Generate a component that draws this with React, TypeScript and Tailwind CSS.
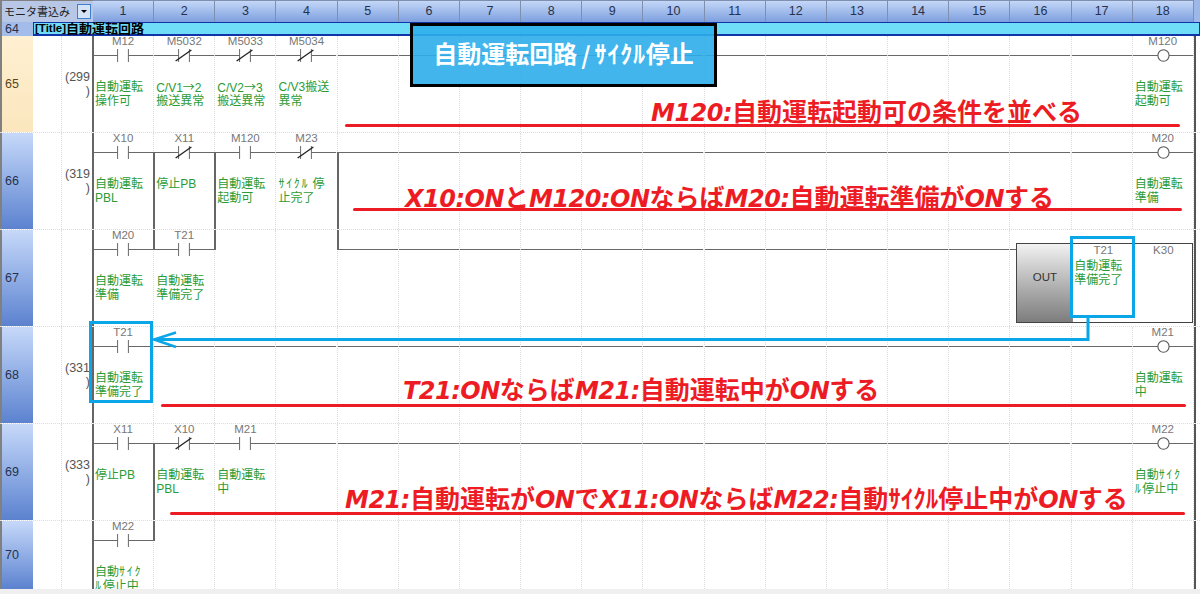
type Kind = 'no' | 'nc' | 'wire' | 'coil' | 'none';

type Cell = {
  kind: Kind;
  label?: string;
  comment?: string;
  up?: boolean;
  down?: boolean;
};

type Row = {
  no: number;
  step?: string;
  cells: Cell[];
  out?: boolean;
  last?: boolean;
};

const no = (label: string, comment: string, extra: Partial<Cell> = {}): Cell => ({ kind: 'no', label, comment, ...extra });
const nc = (label: string, comment: string, extra: Partial<Cell> = {}): Cell => ({ kind: 'nc', label, comment, ...extra });
const wires = (n: number): Cell[] => Array.from({ length: n }, () => ({ kind: 'wire' as Kind }));
const blanks = (n: number): Cell[] => Array.from({ length: n }, () => ({ kind: 'none' as Kind }));
const coil = (label: string, comment: string): Cell => ({ kind: 'coil', label, comment });

const ROWS: Row[] = [
  {
    no: 65,
    step: '(299)',
    cells: [
      no('M12', '自動運転\n操作可'),
      nc('M5032', 'C/V1→2\n搬送異常'),
      nc('M5033', 'C/V2→3\n搬送異常'),
      nc('M5034', 'C/V3搬送\n異常'),
      ...wires(13),
      coil('M120', '自動運転\n起動可'),
    ],
  },
  {
    no: 66,
    step: '(319)',
    cells: [
      no('X10', '自動運転\nPBL'),
      nc('X11', '停止PB', { down: true }),
      no('M120', '自動運転\n起動可', { down: true }),
      nc('M23', 'ｻｲｸﾙ 停\n止完了'),
      { kind: 'wire', down: true },
      ...wires(12),
      coil('M20', '自動運転\n準備'),
    ],
  },
  {
    no: 67,
    out: true,
    cells: [
      no('M20', '自動運転\n準備'),
      no('T21', '自動運転\n準備完了', { up: true }),
      { kind: 'none', up: true },
      ...blanks(1),
      { kind: 'wire', up: true },
      ...wires(10),
    ],
  },
  {
    no: 68,
    step: '(331)',
    cells: [no('T21', '自動運転\n準備完了'), ...wires(16), coil('M21', '自動運転\n中')],
  },
  {
    no: 69,
    step: '(333)',
    cells: [
      no('X11', '停止PB'),
      nc('X10', '自動運転\nPBL', { down: true }),
      no('M21', '自動運転\n中'),
      ...wires(14),
      coil('M22', '自動ｻｲｸ\nﾙ停止中'),
    ],
  },
  {
    no: 70,
    last: true,
    cells: [no('M22', '自動ｻｲｸ\nﾙ停止中'), { kind: 'none', up: true }, ...blanks(16)],
  },
];

const GRID = 'grid grid-cols-[33px_29px_31px_repeat(18,61.17px)_1fr]';
const JP = "font-['Liberation_Sans','Noto_Sans_CJK_JP',sans-serif]";

function Symbol({ kind }: { kind: Kind }) {
  if (kind === 'none') return null;
  return (
    <svg className="absolute left-0 top-[12px] h-[15px] w-full overflow-visible" viewBox="0 0 61.17 15" preserveAspectRatio="none">
      {kind === 'wire' && <path d="M0 7.5H61.17" stroke="#666" strokeWidth="1" />}
      {kind === 'no' && <path d="M0 7.5H25M36 7.5H61.17M25 1V14M36 1V14" stroke="#666" strokeWidth="1" fill="none" />}
      {kind === 'nc' && (
        <>
          <path d="M0 7.5H25M36 7.5H61.17M25 1V14M36 1V14" stroke="#666" strokeWidth="1" fill="none" />
          <path d="M22 13L38 2" stroke="#222" strokeWidth="1.4" />
        </>
      )}
      {kind === 'coil' && (
        <>
          <path d="M0 7.5H61.17" stroke="#666" strokeWidth="1" />
          <circle cx="31" cy="7.5" r="5.7" fill="#fff" stroke="#555" strokeWidth="1.1" />
        </>
      )}
    </svg>
  );
}

// half width katakana and the arrow are set wider in the original comments
function CommentText({ text }: { text: string }) {
  return (
    <>
      {text.split('\n').map((line, n) => (
        <div key={n} className="h-[14px] whitespace-pre">
          {line.split(/([ｦ-ﾟ]+|→)/).map((part, i) => {
            if (part === '→') return <span key={i} className="font-['Noto_Sans_CJK_JP',sans-serif] leading-[14px]">{part}</span>;
            if (/^[ｦ-ﾟ]+$/.test(part)) return <span key={i} className="tracking-[1.7px]">{part}</span>;
            return <span key={i}>{part}</span>;
          })}
        </div>
      ))}
    </>
  );
}

function LadderCell({ cell, first }: { cell: Cell; first: boolean }) {
  return (
    <div className="relative h-full border-r border-dotted border-[#dcdcdc]">
      <Symbol kind={cell.kind} />
      {first && <div className="absolute -left-px top-0 h-full w-[2px] bg-[#666]" />}
      {cell.up && <div className="absolute -left-px top-0 h-[20px] w-[2px] bg-[#666]" />}
      {cell.down && <div className="absolute -left-px bottom-0 top-[19px] w-[2px] bg-[#666]" />}
      {cell.label && (
        <div className="absolute inset-x-0 top-[-2px] text-center font-['Liberation_Sans',sans-serif] text-[11.5px] leading-[14px] text-[#777]">
          {cell.label}
        </div>
      )}
      {cell.comment && (
        <div className={`absolute left-[2px] top-[44px] text-[12px] leading-[14px] text-[#2b9b35] ${JP}`}>
          <CommentText text={cell.comment} />
        </div>
      )}
    </div>
  );
}

function OutBox() {
  return (
    <div className="relative col-span-3 h-full border-r border-dotted border-[#dcdcdc]">
      <div className="absolute left-0 top-[19px] h-px w-[7px] bg-[#666]" />
      <div className="absolute left-[6px] top-[13px] flex h-[80px] w-[177px] border border-[#444] bg-white">
        <div className="flex w-[55px] items-center justify-center bg-gradient-to-b from-[#f2f2f2] to-[#7d7d7d] pb-[10px] font-['Liberation_Sans',sans-serif] text-[11.5px] text-[#333]">
          OUT
        </div>
        <div className="relative w-[61px] border-l border-[#888]">
          <div className="-mt-px text-center font-['Liberation_Sans',sans-serif] text-[11.5px] leading-[14px] text-[#777]">T21</div>
          <div className={`ml-[1px] mt-[2px] text-[12px] leading-[14px] text-[#2b9b35] ${JP}`}>
            <CommentText text={'自動運転\n準備完了'} />
          </div>
        </div>
        <div className="-mt-px flex-1 pl-[1px] text-center font-['Liberation_Sans',sans-serif] text-[11.5px] leading-[14px] text-[#777]">K30</div>
      </div>
    </div>
  );
}

function RowHeader({ no, current }: { no: number; current: boolean }) {
  return (
    <div
      className={`flex h-full items-center border-l-2 border-[#808080] pl-[3px] font-['Liberation_Sans',sans-serif] text-[12.5px] ${
        current ? 'bg-gradient-to-b from-[#fff0d2] to-[#fbe6bd] text-[#5a4620]' : 'bg-gradient-to-b from-[#c7d9f9] to-[#5c82cf] text-[#26324d]'
      }`}
    >
      {no}
    </div>
  );
}

function Note({ text }: { text: string }) {
  return (
    <>
      {text.split(/([A-Za-z0-9:]+)/).map((part, i) =>
        /^[A-Za-z0-9:]+$/.test(part) ? (
          <span key={i} className="font-['DejaVu_Sans',sans-serif] text-[24px] italic tracking-[-0.5px]">
            {part}
          </span>
        ) : (
          <span key={i}>{part}</span>
        ),
      )}
    </>
  );
}

const NOTES = [
  { text: 'M120:自動運転起動可の条件を並べる', cls: 'left-[651px] top-[93px]', line: 'left-[345px] top-[124px] w-[835px]' },
  { text: 'X10:ONとM120:ONならばM20:自動運転準備がONする', cls: 'left-[405px] top-[179px]', line: 'left-[353px] top-[208px] w-[829px]' },
  { text: 'T21:ONならばM21:自動運転中がONする', cls: 'left-[403px] top-[371px]', line: 'left-[161px] top-[404px] w-[1025px]' },
  { text: 'M21:自動運転がONでX11:ONならばM22:自動ｻｲｸﾙ停止中がONする', cls: 'left-[345px] top-[480px]', line: 'left-[170px] top-[512px] w-[1015px]' },
];

export default function App() {
  return (
    <div className="relative h-[594px] w-[1200px] overflow-hidden bg-white">
      {/* column header */}
      <div className={`${GRID} h-[22px]`}>
        <div className={`col-span-3 flex items-center justify-between border-l-2 border-t border-[#808080] bg-[#b8c7e6] pl-[2px] pr-[2px] text-[11px] leading-[20px] text-[#222] ${JP}`}>
          <span>モニタ書込み</span>
          <span className="flex h-[15px] w-[14px] items-center justify-center border border-[#3f7fd0] bg-[#d5e3f7]">
            <span className="h-0 w-0 border-x-[3px] border-t-[3px] border-x-transparent border-t-black" />
          </span>
        </div>
        {Array.from({ length: 18 }, (_, i) => (
          <div
            key={i}
            className="flex items-center justify-center border-r border-t border-[#7f8fb0] bg-gradient-to-b from-[#c4d7f7] to-[#7e9fdf] pb-[2px] font-['Liberation_Sans',sans-serif] text-[12.5px] leading-[18px] text-[#26324d]"
          >
            {i + 1}
          </div>
        ))}
        <div className="bg-[#9db7e8]" />
      </div>

      {/* title row */}
      <div className={`${GRID} h-[14px] grid-rows-[14px] overflow-hidden`}>
        <div className="flex items-center border-l-2 border-[#808080] bg-[#a3bcea] pl-[3px] font-['Liberation_Sans',sans-serif] text-[12.5px] leading-[14px] text-[#26324d]">64</div>
        <div className={`col-start-2 col-end-[-1] flex items-center border border-b-2 border-[#1135a8] bg-[#6fdcf8] pl-[1px] text-[13px] font-bold leading-none text-black ${JP}`}>
          <span className="text-[11.5px]">[Title]</span>自動運転回路
        </div>
      </div>

      {/* ladder rows */}
      {ROWS.map((row) => (
        <div key={row.no} className={`${GRID} ${row.last ? 'h-[68px]' : 'h-[97px] border-b border-dotted border-[#dcdcdc]'} box-border`}>
          <RowHeader no={row.no} current={row.no === 65} />
          <div className="h-full border-r border-dotted border-[#dcdcdc]" />
          <div className="h-full pr-[3px] pt-[34px] text-right font-['Liberation_Sans',sans-serif] text-[12.5px] leading-[14px] text-[#555]">
            {row.step && (
              <>
                {row.step.slice(0, 4)}
                <br />)
              </>
            )}
          </div>
          {row.cells.map((cell, i) => (
            <LadderCell key={i} cell={cell} first={i === 0} />
          ))}
          {row.out && <OutBox />}
          <div className="h-full border-l-2 border-[#555]" />
        </div>
      ))}

      {/* bottom scroll bar */}
      <div className="relative z-10 h-[5px] bg-[#efefef]" />

      {/* heading callout */}
      <div className={`absolute left-[410px] top-[23px] flex h-[64px] w-[307px] items-center justify-center border-[3px] border-black bg-[#2eaeea]/90 text-[24px] font-bold text-white ${JP}`}>
        自動運転回路<span className="mx-[4px] font-['Noto_Sans_CJK_JP',sans-serif]">/</span>
        <span className="tracking-[0.8px]">ｻｲｸﾙ</span>停止
      </div>

      {/* red notes */}
      {NOTES.map((n) => (
        <div key={n.text}>
          <div className={`absolute whitespace-nowrap text-[25px] font-bold leading-[34px] text-[#ed1c24] font-['Noto_Sans_CJK_JP',sans-serif] ${n.cls}`}>
            <Note text={n.text} />
          </div>
          <div className={`absolute h-[3px] rounded-full bg-[#ed1c24] ${n.line}`} />
        </div>
      ))}

      {/* blue frames and arrow */}
      <div className="absolute left-[89px] top-[321px] h-[82px] w-[64px] border-[3px] border-[#0aa6e8]" />
      <div className="absolute left-[1070px] top-[236px] h-[82px] w-[65px] border-[3px] border-[#0aa6e8]" />
      <svg className="absolute left-0 top-0 h-[594px] w-[1200px]" viewBox="0 0 1200 594" fill="none">
        <path d="M1088 317V339.5H154" stroke="#0aa6e8" strokeWidth="3" />
        <path d="M176 332.5L154 339.5L176 347" stroke="#0aa6e8" strokeWidth="2.5" />
      </svg>
    </div>
  );
}
